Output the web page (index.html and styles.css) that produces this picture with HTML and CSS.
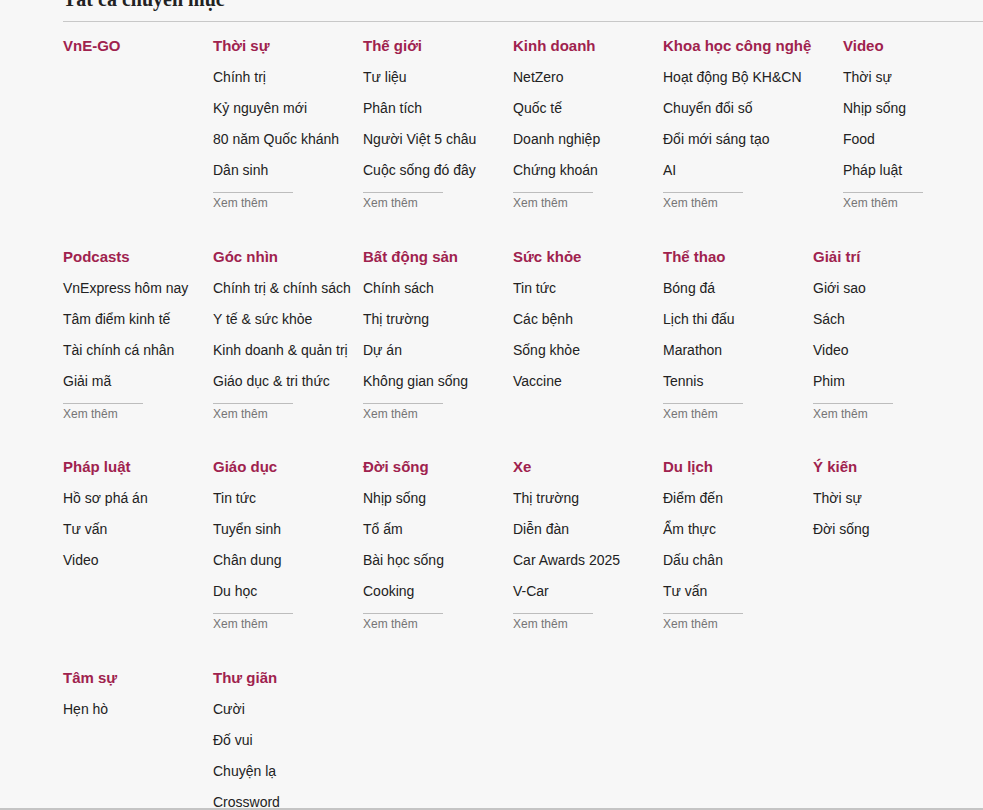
FILE: index.html
```html
<!DOCTYPE html>
<html lang="vi">
<head>
<meta charset="utf-8">
<title>Tất cả chuyên mục</title>
<link rel="stylesheet" href="styles.css">
</head>
<body>
<div class="page">
  <h2 class="title">Tất cả chuyên mục</h2>
  <div class="rows">
    <div class="row">
      <div class="col"><a class="cat">VnE-GO</a></div>
      <div class="col"><a class="cat">Thời sự</a>
        <ul><li>Chính trị</li><li>Kỷ nguyên mới</li><li>80 năm Quốc khánh</li><li>Dân sinh</li></ul>
        <a class="more">Xem thêm</a></div>
      <div class="col"><a class="cat">Thế giới</a>
        <ul><li>Tư liệu</li><li>Phân tích</li><li>Người Việt 5 châu</li><li>Cuộc sống đó đây</li></ul>
        <a class="more">Xem thêm</a></div>
      <div class="col"><a class="cat">Kinh doanh</a>
        <ul><li>NetZero</li><li>Quốc tế</li><li>Doanh nghiệp</li><li>Chứng khoán</li></ul>
        <a class="more">Xem thêm</a></div>
      <div class="col wide"><a class="cat">Khoa học công nghệ</a>
        <ul><li>Hoạt động Bộ KH&amp;CN</li><li>Chuyển đổi số</li><li>Đổi mới sáng tạo</li><li>AI</li></ul>
        <a class="more">Xem thêm</a></div>
      <div class="col"><a class="cat">Video</a>
        <ul><li>Thời sự</li><li>Nhịp sống</li><li>Food</li><li>Pháp luật</li></ul>
        <a class="more">Xem thêm</a></div>
    </div>
    <div class="row">
      <div class="col"><a class="cat">Podcasts</a>
        <ul><li>VnExpress hôm nay</li><li>Tâm điểm kinh tế</li><li>Tài chính cá nhân</li><li>Giải mã</li></ul>
        <a class="more">Xem thêm</a></div>
      <div class="col"><a class="cat">Góc nhìn</a>
        <ul><li>Chính trị &amp; chính sách</li><li>Y tế &amp; sức khỏe</li><li>Kinh doanh &amp; quản trị</li><li>Giáo dục &amp; tri thức</li></ul>
        <a class="more">Xem thêm</a></div>
      <div class="col"><a class="cat">Bất động sản</a>
        <ul><li>Chính sách</li><li>Thị trường</li><li>Dự án</li><li>Không gian sống</li></ul>
        <a class="more">Xem thêm</a></div>
      <div class="col"><a class="cat">Sức khỏe</a>
        <ul><li>Tin tức</li><li>Các bệnh</li><li>Sống khỏe</li><li>Vaccine</li></ul></div>
      <div class="col"><a class="cat">Thể thao</a>
        <ul><li>Bóng đá</li><li>Lịch thi đấu</li><li>Marathon</li><li>Tennis</li></ul>
        <a class="more">Xem thêm</a></div>
      <div class="col"><a class="cat">Giải trí</a>
        <ul><li>Giới sao</li><li>Sách</li><li>Video</li><li>Phim</li></ul>
        <a class="more">Xem thêm</a></div>
    </div>
    <div class="row">
      <div class="col"><a class="cat">Pháp luật</a>
        <ul><li>Hồ sơ phá án</li><li>Tư vấn</li><li>Video</li></ul></div>
      <div class="col"><a class="cat">Giáo dục</a>
        <ul><li>Tin tức</li><li>Tuyển sinh</li><li>Chân dung</li><li>Du học</li></ul>
        <a class="more">Xem thêm</a></div>
      <div class="col"><a class="cat">Đời sống</a>
        <ul><li>Nhịp sống</li><li>Tổ ấm</li><li>Bài học sống</li><li>Cooking</li></ul>
        <a class="more">Xem thêm</a></div>
      <div class="col"><a class="cat">Xe</a>
        <ul><li>Thị trường</li><li>Diễn đàn</li><li>Car Awards 2025</li><li>V-Car</li></ul>
        <a class="more">Xem thêm</a></div>
      <div class="col"><a class="cat">Du lịch</a>
        <ul><li>Điểm đến</li><li>Ẩm thực</li><li>Dấu chân</li><li>Tư vấn</li></ul>
        <a class="more">Xem thêm</a></div>
      <div class="col"><a class="cat">Ý kiến</a>
        <ul><li>Thời sự</li><li>Đời sống</li></ul></div>
    </div>
    <div class="row">
      <div class="col"><a class="cat">Tâm sự</a>
        <ul><li>Hẹn hò</li></ul></div>
      <div class="col"><a class="cat">Thư giãn</a>
        <ul><li>Cười</li><li>Đố vui</li><li>Chuyện lạ</li><li>Crossword</li></ul>
        <a class="more">Xem thêm</a></div>
    </div>
  </div>
</div>
<div class="bottom-edge"></div>
</body>
</html>
```

FILE: styles.css
```css
html, body {
  margin: 0;
  padding: 0;
  background: #f7f7f7;
}
body {
  font-family: "Liberation Sans", Arial, sans-serif;
  color: #222;
  overflow: hidden;
  height: 810px;
}
.page {
  padding-left: 63px;
  margin-top: -13px;
}
.title {
  margin: 0;
  font-family: "Liberation Serif", "Times New Roman", serif;
  font-weight: bold;
  font-size: 20px;
  line-height: 24px;
  color: #222;
  padding-bottom: 10px;
  border-bottom: 1px solid #c8c8c8;
}
.rows {
  padding-top: 8px;
}
.row {
  display: flex;
  margin-bottom: 28.5px;
}
.col {
  flex: 0 0 150px;
  width: 150px;
  display: flex;
  flex-direction: column;
  white-space: nowrap;
}
.col.wide {
  flex-basis: 180px;
  width: 180px;
}
.cat {
  display: block;
  font-size: 15px;
  font-weight: bold;
  line-height: 31px;
  color: #9f224e;
}
.col ul {
  list-style: none;
  margin: 1px 0 0;
  padding: 0;
}
.col li {
  font-size: 14px;
  line-height: 31px;
  color: #222;
}
.more {
  display: block;
  width: 80px;
  margin-top: 6px;
  padding-top: 1px;
  border-top: 1px solid #bdbdbd;
  font-size: 12px;
  line-height: 18px;
  color: #757575;
}
.bottom-edge {
  position: fixed;
  left: 0;
  right: 0;
  bottom: 0;
  height: 2px;
  background: #c4c4c4;
}
```
